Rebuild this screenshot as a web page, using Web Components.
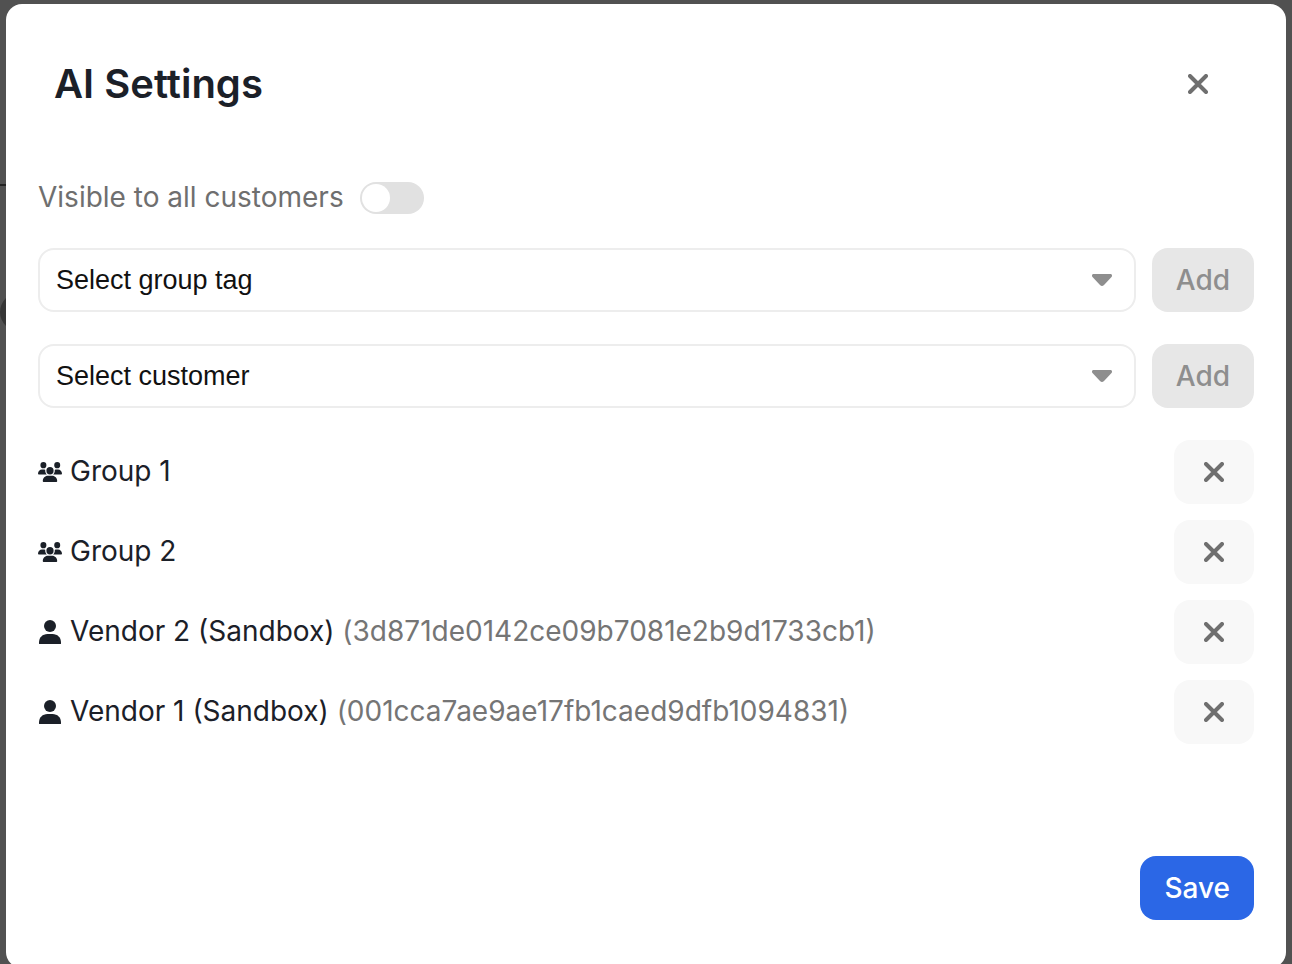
<!DOCTYPE html>
<html lang="en">
<head>
<meta charset="utf-8">
<meta name="viewport" content="width=device-width, initial-scale=1">
<title>AI Settings</title>
<style>
  html, body { height: 100%; }
  body { margin: 0; overflow: hidden; background: #515151; font-family: Inter, "Liberation Sans", sans-serif; font-size: 28px; line-height: 40px; color: #1b2028; }
</style>
</head>
<body>
<modal-backdrop>
  <settings-dialog heading="AI Settings">
    <toggle-switch label="Visible to all customers"></toggle-switch>
    <picker-row placeholder="Select group tag"></picker-row>
    <picker-row placeholder="Select customer"></picker-row>
    <access-list>
      <access-item kind="group">Group 1</access-item>
      <access-item kind="group">Group 2</access-item>
      <access-item kind="person" ref="3d871de0142ce09b7081e2b9d1733cb1">Vendor 2 (Sandbox)</access-item>
      <access-item kind="person" ref="001cca7ae9ae17fb1caed9dfb1094831">Vendor 1 (Sandbox)</access-item>
    </access-list>
    <action-button slot="footer" variant="primary">Save</action-button>
  </settings-dialog>
</modal-backdrop>
<script>
const ICONS = {
  close: '<svg viewBox="0 0 20 20" width="20" height="20" aria-hidden="true"><path d="M2 2 18 18M18 2 2 18" fill="none" stroke="currentColor" stroke-width="4" stroke-linecap="round"/></svg>',
  group: '<svg viewBox="0 0 640 512" width="24" height="20" preserveAspectRatio="none" aria-hidden="true"><path fill="currentColor" d="M144 0a80 80 0 1 1 0 160A80 80 0 1 1 144 0zM512 0a80 80 0 1 1 0 160A80 80 0 1 1 512 0zM0 298.700C0 239.800 47.800 192 106.700 192h42.700c15.900 0 31 3.500 44.600 9.700c-1.300 7.200-1.900 14.700-1.900 22.300c0 38.200 16.800 72.500 43.300 96H21.300C9.600 320 0 310.400 0 298.700zM405.300 320h-.7c26.600-23.500 43.300-57.800 43.300-96c0-7.600-.7-15-1.900-22.300c13.600-6.300 28.700-9.700 44.600-9.700h42.700C592.200 192 640 239.800 640 298.700c0 11.800-9.600 21.300-21.300 21.300H405.300zM224 224a96 96 0 1 1 192 0 96 96 0 1 1-192 0zM128 485.300C128 411.700 187.700 352 261.300 352h117.400C452.300 352 512 411.700 512 485.300c0 14.700-11.900 26.700-26.700 26.700H154.700c-14.700 0-26.700-11.900-26.700-26.700z"/></svg>',
  person: '<svg viewBox="0 0 24 24" width="24" height="24" aria-hidden="true"><circle cx="12" cy="6" r="6" fill="currentColor"/><path fill="currentColor" d="M1.500 24C1 24 1 23.500 1 22.500 1 17.500 4.500 14 9.500 14h5c5 0 8.500 3.500 8.500 8.500 0 1 0 1.500-.5 1.500z"/></svg>',
  caret: '<svg viewBox="0 0 20 12" width="20" height="12" aria-hidden="true"><path fill="currentColor" d="M1.500 0h17C20 0 20.500 2 19.500 3L12 11q-2 2-4 0L.5 3C-.5 2 0 0 1.500 0z"/></svg>'
};

function define(name, render) {
  customElements.define(name, class extends HTMLElement {
    constructor() {
      super();
      this.attachShadow({ mode: 'open' });
    }
    connectedCallback() {
      this.shadowRoot.innerHTML = render(this);
    }
  });
}

define('modal-backdrop', () => `
  <style>
    :host { display: block; position: relative; box-sizing: border-box; min-height: 100%; padding: 4px 6px; background: #515151; }
    .rule { position: absolute; left: 0; width: 50%; top: 184px; border-top: 2px dashed #222; }
    .dot { position: absolute; left: 0; top: 293px; width: 38px; height: 38px; border-radius: 50%; background: #363636; }
  </style>
  <div class="rule"></div><div class="dot"></div>
  <slot></slot>`);

define('settings-dialog', el => `
  <style>
    :host { display: block; position: relative; background: #fff; border-radius: 16px; }
    header { display: flex; align-items: center; justify-content: space-between; padding: 48px; }
    h1 { margin: 0; font-size: 40px; line-height: 64px; font-weight: 600; }
    .body { display: flex; flex-direction: column; gap: 32px; padding: 16px 32px 0; }
    footer { display: flex; justify-content: flex-end; padding: 112px 32px 48px; }
  </style>
  <section role="dialog" aria-labelledby="title">
    <header><h1 id="title">${el.getAttribute('heading')}</h1><icon-button label="Close" plain></icon-button></header>
    <div class="body"><slot></slot></div>
    <footer><slot name="footer"></slot></footer>
  </section>`);

define('toggle-switch', el => `
  <style>
    :host { display: flex; align-items: center; gap: 16px; height: 36px; color: #6f6f6f; }
    label { padding-bottom: 2px; }
    input { appearance: none; box-sizing: border-box; width: 64px; height: 32px; margin: 0; padding: 2px; border-radius: 16px; background: #e1e1e1; display: flex; }
    input::before { content: ""; width: 28px; height: 28px; border-radius: 50%; background: #fff; }
    input:checked { background: #2b67e6; justify-content: flex-end; }
  </style>
  <label for="toggle">${el.getAttribute('label')}</label><input id="toggle" type="checkbox" role="switch">`);

define('picker-row', el => `
  <style>
    :host { display: flex; gap: 16px; }
    .field { flex: 1; display: grid; align-items: center; }
    select { grid-area: 1 / 1; appearance: none; box-sizing: border-box; width: 100%; height: 64px; margin: 0; padding: 0 56px 0 16px; border: 2px solid #ededed; border-radius: 16px; background: #fff; color: #111; font: 27px "Liberation Sans", sans-serif; }
    .caret { grid-area: 1 / 1; justify-self: end; display: flex; margin-right: 24px; color: #8e8e8e; pointer-events: none; }
  </style>
  <div class="field">
    <select aria-label="${el.getAttribute('placeholder')}"><option>${el.getAttribute('placeholder')}</option></select>
    <span class="caret">${ICONS.caret}</span>
  </div>
  <action-button disabled>Add</action-button>`);

define('action-button', el => `
  <style>
    :host { display: block; }
    button { display: block; height: 64px; margin: 0; padding: 0 24px; border: 0; border-radius: 16px; font: inherit; font-weight: 500; background: #e7e7e7; color: #8e8e8e; }
    button.primary { background: #2b67e6; color: #fff; }
  </style>
  <button type="button" class="${el.getAttribute('variant') || ''}" ${el.hasAttribute('disabled') ? 'disabled' : ''}><slot></slot></button>`);

define('icon-button', el => `
  <style>
    :host { display: block; }
    button { display: flex; align-items: center; justify-content: center; width: 80px; height: 64px; margin: 0; padding: 0; border: 0; border-radius: 16px; background: #f8f8f8; color: #6f6f6f; }
    :host([plain]) button { background: transparent; }
  </style>
  <button type="button" aria-label="${el.getAttribute('label')}">${ICONS.close}</button>`);

define('access-list', () => `
  <style>:host { display: flex; flex-direction: column; gap: 16px; }</style>
  <slot></slot>`);

define('access-item', el => {
  const ref = el.getAttribute('ref');
  return `
  <style>
    :host { display: flex; align-items: center; gap: 8px; }
    .icon { display: flex; width: 24px; }
    .name { flex: 1; padding-bottom: 2px; }
    .ref { color: #757575; }
  </style>
  <span class="icon">${ICONS[el.getAttribute('kind')]}</span>
  <span class="name"><slot></slot>${ref ? ` <span class="ref">(${ref})</span>` : ''}</span>
  <icon-button label="Remove ${el.textContent}"></icon-button>`;
});
</script>
</body>
</html>
